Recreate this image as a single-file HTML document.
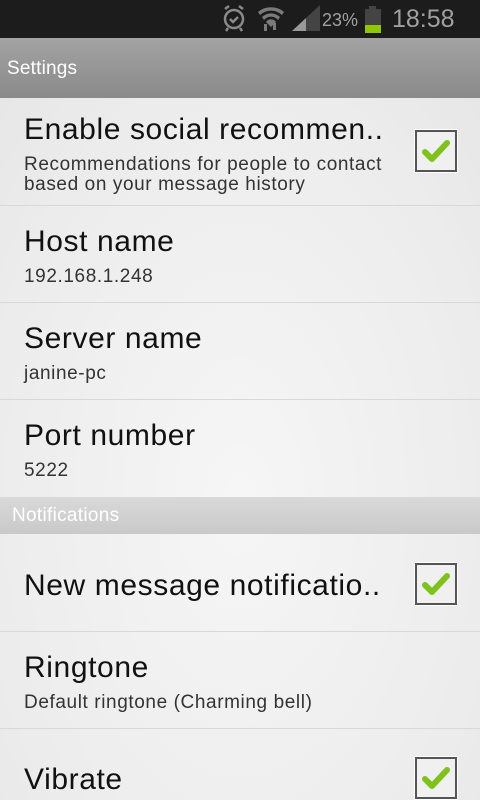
<!DOCTYPE html>
<html><head><meta charset="utf-8"><style>
*{margin:0;padding:0;box-sizing:border-box}
html,body{width:480px;height:800px;overflow:hidden}
body{font-family:"Liberation Sans",sans-serif;background:radial-gradient(ellipse 420px 700px at 240px 500px,#f6f6f6 0%,#ececec 60%,#e2e2e2 100%);position:relative}
.sb{position:absolute;left:0;top:0;width:480px;height:38px;background:#1c1c1c}
.tb{position:absolute;left:0;top:38px;width:480px;height:60px;background:linear-gradient(#a3a3a3,#8a8a8a);color:#fff;font-size:19px;letter-spacing:0.2px;padding:20px 0 0 7px}
.row{position:absolute;left:0;width:480px;border-bottom:1px solid #d8d8d8}
.t{position:absolute;left:24px;font-size:30px;color:#111;letter-spacing:0.6px;white-space:nowrap}
.s{position:absolute;left:24px;font-size:19px;color:#333;line-height:20px;letter-spacing:0.6px;white-space:nowrap}
.cat{position:absolute;left:0;top:497px;width:480px;height:37px;background:linear-gradient(#d9d9d9,#c9c9c9);color:#fff;font-size:19px;letter-spacing:0.3px;padding:8px 0 0 12px}
.cb{position:absolute;left:415px;width:42px;height:42px;border:2px solid #555;background:#f0f0f0;box-shadow:0 0 0 1px #fff}
.cb svg{position:absolute;left:5px;top:6px}
</style></head><body>
<div class="sb">
<svg width="480" height="38" style="position:absolute;left:0;top:0">
<g fill="none" stroke="#8a8a8a" stroke-width="2.5"><circle cx="234" cy="19" r="9"/><path d="M230 19l3 3 5-5M225 9l4-3M243 9l-4-3M228 28l-2 3M240 28l2 3"/></g>
<g fill="#7a7a7a"><path d="M258 12a20 20 0 0 1 26 0l-2 3a16 16 0 0 0-22 0z"/><path d="M262 17a13 13 0 0 1 18 0l-2 3a9 9 0 0 0-14 0z"/><path d="M266 22a6 6 0 0 1 10 0l-5 5z"/><rect x="264" y="24" width="3" height="7"/><rect x="273" y="23" width="3" height="7"/></g>
<path d="M292 31L320 5V31Z" fill="#444"/><path d="M292 31L306 18V31Z" fill="#999"/>
<text x="322" y="26" fill="#a0a0a0" font-size="18" font-family="Liberation Sans">23%</text>
<rect x="369" y="6" width="7" height="3" fill="#444"/><rect x="365" y="9" width="16" height="24" fill="#444"/><rect x="365" y="25" width="16" height="8" fill="#8ec800"/>
<text x="392" y="27" fill="#a0a0a0" font-size="25" font-family="Liberation Sans">18:58</text>
</svg></div>
<div class="tb">Settings</div>
<div class="row" style="top:98px;height:108px"><div class="t" style="top:15px">Enable social recommen..</div><div class="s" style="top:57px">Recommendations for people to contact<br>based on your message history</div>
<div class="cb" style="top:32px"><svg width="28" height="26" viewBox="0 0 28 26"><path d="M3 14l7 7L25 5" fill="none" stroke="#7fc21c" stroke-width="6" stroke-linecap="round" stroke-linejoin="round"/></svg></div></div>
<div class="row" style="top:206px;height:97px"><div class="t" style="top:19px">Host name</div><div class="s" style="top:61px">192.168.1.248</div></div>
<div class="row" style="top:303px;height:97px"><div class="t" style="top:19px">Server name</div><div class="s" style="top:61px">janine-pc</div></div>
<div class="row" style="top:400px;height:97px;border:none"><div class="t" style="top:19px">Port number</div><div class="s" style="top:61px">5222</div></div>
<div class="cat">Notifications</div>
<div class="row" style="top:534px;height:98px"><div class="t" style="top:35px">New message notificatio..</div>
<div class="cb" style="top:29px"><svg width="28" height="26" viewBox="0 0 28 26"><path d="M3 14l7 7L25 5" fill="none" stroke="#7fc21c" stroke-width="6" stroke-linecap="round" stroke-linejoin="round"/></svg></div></div>
<div class="row" style="top:632px;height:97px"><div class="t" style="top:19px">Ringtone</div><div class="s" style="top:61px">Default ringtone (Charming bell)</div></div>
<div class="row" style="top:729px;height:71px;border:none"><div class="t" style="top:34px">Vibrate</div>
<div class="cb" style="top:28px"><svg width="28" height="26" viewBox="0 0 28 26"><path d="M3 14l7 7L25 5" fill="none" stroke="#7fc21c" stroke-width="6" stroke-linecap="round" stroke-linejoin="round"/></svg></div></div>
</body></html>
